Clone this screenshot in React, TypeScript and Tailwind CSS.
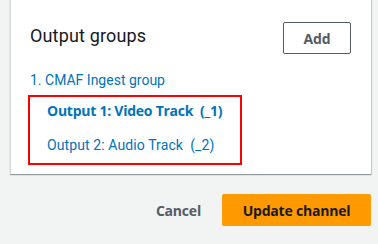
export default function App() {
  return (
    <div className="w-[378px] h-[244px] bg-[#f2f3f3] overflow-hidden" style={{ fontFamily: 'Roboto, "Noto Sans", sans-serif' }}>
      <div className="ml-[10px] mr-[7px] -mt-[10px] bg-white border-l border-[#d5dbdb] shadow-[0_1px_1px_rgba(0,28,36,0.3),1px_1px_1px_rgba(0,28,36,0.15)] pt-[32px] pb-[9px]">
        <div className="flex items-start justify-between pl-[19px] pr-[20px]">
          <h2 className="text-[18px] leading-[22px] text-[#16191f] mt-[3px] tracking-[0.15px]">Output groups</h2>
          <button className="w-[68px] h-[32px] border border-[#545b64] rounded-[2px] text-[14px] font-bold text-[#545b64] font-['Open_Sans'] tracking-[-0.2px]">
            Add
          </button>
        </div>
        <div className="pl-[19px] mt-[16px] text-[14px] text-[#0073bb]">
          <div className="leading-[20px]">1. CMAF Ingest group</div>
          <div className="ml-[-2px] mt-[5px] w-[214px] border-2 border-[#ff0000] pl-[17px] py-[2px]">
            <div className="leading-[20px] py-[2px] font-bold font-['Open_Sans'] tracking-[-0.25px]">Output 1: Video Track&nbsp; (_1)</div>
            <div className="leading-[20px] mt-[12px] mb-[6px] tracking-[0.1px]">Output 2: Audio Track&nbsp; (_2)</div>
          </div>
        </div>
      </div>
      <div className="flex items-center justify-end gap-[21px] pr-[7px] mt-[20px] font-['Open_Sans'] tracking-[-0.2px]">
        <button className="text-[14px] font-bold text-[#545b64]">Cancel</button>
        <button className="w-[149px] h-[32px] bg-[#ff9900] rounded-[2px] text-[14px] font-bold text-[#16191f]">
          Update channel
        </button>
      </div>
    </div>
  );
}
